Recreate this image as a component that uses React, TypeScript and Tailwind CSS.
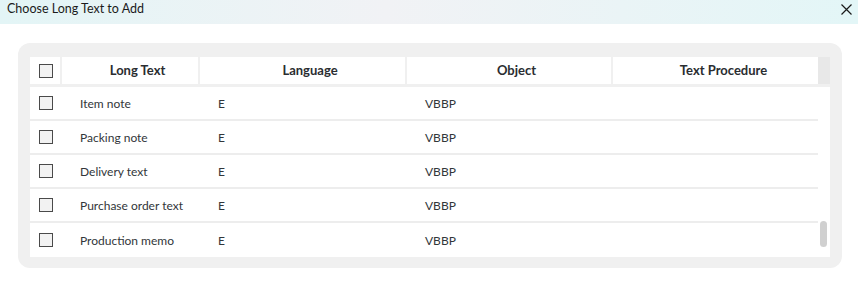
import React from "react";

const rows = [
  "Item note",
  "Packing note",
  "Delivery text",
  "Purchase order text",
  "Production memo",
];

function Box() {
  return <div className="w-[14px] h-[14px] border border-[#4a4a4a] bg-[#f2f2f2]" />;
}

export default function App() {
  return (
    <div className="w-[858px] h-[284px] bg-white relative" style={{ fontFamily: "Lato, 'Noto Sans', sans-serif" }}>
      <div
        className="h-[24px] flex items-center justify-between pl-[7px] pr-[6px] bg-[linear-gradient(90deg,#e3f5f6_0%,#f1f2f5_45%,#e3f6f7_100%)]"
      >
        <span className="text-[12.5px] text-[#1b1b1b] mt-[-5px]" style={{ fontFamily: "Lato, 'Noto Sans', sans-serif" }}>
          Choose Long Text to Add
        </span>
        <svg width="11" height="11" viewBox="0 0 11 11" className="mt-[-5px]">
          <path d="M0.5 0.5 L10.5 10.5 M10.5 0.5 L0.5 10.5" stroke="#1a1a1a" strokeWidth="1.2" fill="none" />
        </svg>
      </div>
      <div className="mt-[19px] ml-[18px] w-[824px] h-[225px] bg-[#f0f0f0] rounded-[12px] pt-[13px] px-[12px]">
        <div className="w-[800px] h-[201px] bg-white flex flex-col">
          <div className="flex h-[32px] bg-[#f0f0f0] pt-[1px] pb-[3px]">
            <div className="grid grid-cols-[30px_136px_205px_204px_205px] gap-x-[2px] w-[788px] text-[13px] font-bold text-[#2a2d31]">
              <div className="bg-white flex items-center justify-center pl-[2px]">
                <Box />
              </div>
              <div className="bg-white flex items-center justify-center pl-[15px] pt-[1px]">Long Text</div>
              <div className="bg-white flex items-center justify-center pl-[15px] pt-[1px]">Language</div>
              <div className="bg-white flex items-center justify-center pl-[15px] pt-[1px]">Object</div>
              <div className="bg-white flex items-center justify-center pl-[16px] pt-[1px]">Text Procedure</div>
            </div>
            <div className="w-[12px] bg-[#e8e8e8]" />
          </div>
          <div className="flex flex-1">
            <div className="w-[788px] flex flex-col">
              {rows.map((r, i) => (
                <div
                  key={r}
                  className={`flex h-[34px] items-center text-[12px] text-[#32363a] ${i < rows.length - 1 ? "border-b-2 border-[#ededed]" : ""}`}
                >
                  <div className="w-[30px] flex justify-center pl-[2px]">
                    <Box />
                  </div>
                  <div className="w-[158px] pl-[20px] pt-[1px]">{r}</div>
                  <div className="w-[207px] pt-[1px]">E</div>
                  <div className="w-[200px] pt-[1px]">VBBP</div>
                </div>
              ))}
            </div>
            <div className="w-[12px] relative">
              <div className="absolute left-[2px] top-[134px] w-[7px] h-[26px] rounded-full bg-[#d0d0d0]" />
            </div>
          </div>
        </div>
      </div>
    </div>
  );
}
